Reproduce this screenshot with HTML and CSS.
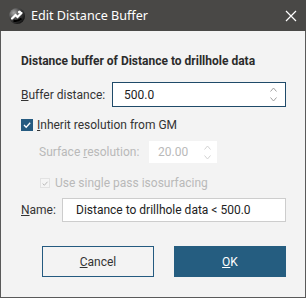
FILE: index.html
```html
<!DOCTYPE html>
<html lang="en">
<head>
  <meta charset="UTF-8">
  <title>Edit Distance Buffer</title>
  <link rel="stylesheet" href="styles.css">
</head>
<body>
  <div class="window">
    <!-- title bar -->
    <div class="titlebar">
      <svg class="app-icon" width="18" height="18" viewBox="0 0 18 18">
        <defs>
          <radialGradient id="ball" cx="0.3" cy="0.3" r="0.85">
            <stop offset="0" stop-color="#a8a8a8"/>
            <stop offset="0.45" stop-color="#4a4a4a"/>
            <stop offset="1" stop-color="#050505"/>
          </radialGradient>
        </defs>
        <circle cx="9" cy="9" r="8" fill="url(#ball)"/>
        <path d="M4 11.5 L7.5 8 L9.5 10 L13.5 6" stroke="#fff" stroke-width="2.2" fill="none" stroke-linecap="round"/>
        <circle cx="11.5" cy="5" r="1.6" fill="#fff"/>
        <path d="M5.5 13.5 Q9 15 13.5 11.5" stroke="#000" stroke-width="2" fill="none"/>
      </svg>
      <span class="title">Edit Distance Buffer</span>
      <svg class="close" width="12" height="12" viewBox="0 0 12 12">
        <path d="M1 1 L11 11 M11 1 L1 11" stroke="#fff" stroke-width="1.2"/>
      </svg>
    </div>

    <div class="content">
      <h1 class="heading">Distance buffer of Distance to drillhole data</h1>

      <div class="row">
        <label class="label"><u>B</u>uffer distance:</label>
        <div class="input spin focused">
          <span>500.0</span>
          <span class="arrows">
            <svg width="7" height="5" viewBox="0 0 7 5"><path d="M0.5 4.5 L3.5 1 L6.5 4.5" stroke="#a0a0a0" fill="none"/></svg>
            <svg width="7" height="5" viewBox="0 0 7 5"><path d="M0.5 0.5 L3.5 4 L6.5 0.5" stroke="#a0a0a0" fill="none"/></svg>
          </span>
        </div>
      </div>

      <div class="check-row">
        <span class="box checked">
          <svg width="10" height="10" viewBox="0 0 10 10"><path d="M2 5 L4.2 7.2 L8.2 2.8" stroke="#fff" stroke-width="1.3" fill="none"/></svg>
        </span>
        <span class="check-label"><u>I</u>nherit resolution from GM</span>
      </div>

      <div class="row sub disabled">
        <label class="label">Surface <u>r</u>esolution:</label>
        <div class="input spin small">
          <span>20.00</span>
          <span class="arrows">
            <svg width="7" height="5" viewBox="0 0 7 5"><path d="M0.5 4.5 L3.5 1 L6.5 4.5" stroke="#d2d2d2" fill="none"/></svg>
            <svg width="7" height="5" viewBox="0 0 7 5"><path d="M0.5 0.5 L3.5 4 L6.5 0.5" stroke="#d2d2d2" fill="none"/></svg>
          </span>
        </div>
      </div>

      <div class="check-row sub disabled">
        <span class="box off">
          <svg width="9" height="9" viewBox="0 0 10 10"><path d="M2 5 L4.2 7.2 L8.2 2.8" stroke="#b5b5b5" stroke-width="1.2" fill="none"/></svg>
        </span>
        <span class="check-label">Use single pass isosurfacing</span>
      </div>

      <div class="row name-row">
        <label class="label"><u>N</u>ame:</label>
        <div class="input plain">Distance to drillhole data &lt; 500.0</div>
      </div>

      <div class="buttons">
        <button class="btn cancel"><u>C</u>ancel</button>
        <button class="btn ok"><u>O</u>K</button>
      </div>
    </div>
  </div>
</body>
</html>
```

FILE: styles.css
```css
* {
  box-sizing: border-box;
  margin: 0;
  padding: 0;
}
body {
  background: #f3f3f3;
  font-family: Roboto, "Liberation Sans", sans-serif;
  font-size: 12px;
  color: #222;
}
.window {
  width: 306px;
  height: 298px;
  border: 1px solid #595959;
  border-top: none;
  background: #f3f3f3;
  display: flex;
  flex-direction: column;
}
/* title bar */
.titlebar {
  height: 31px;
  flex: none;
  background: #494846;
  display: flex;
  align-items: center;
  padding: 0 9px 0 8px;
  margin: 0 -1px;
}
.app-icon {
  flex: none;
}
.title {
  font-family: "Noto Sans", "Open Sans", sans-serif;
  color: #fff;
  font-size: 12.6px;
  margin-left: 5px;
  flex: 1;
}
.close {
  flex: none;
}
/* dialog content */
.content {
  padding: 21px 19px 0 20px;
  display: flex;
  flex-direction: column;
}
.heading {
  font-size: 12px;
  font-weight: bold;
  color: #2b2b2b;
  line-height: 18px;
  margin-bottom: 12px;
}
.row {
  display: flex;
  align-items: center;
  line-height: 16px;
}
.label {
  color: #333;
  width: 91px;
  flex: none;
  white-space: nowrap;
}
.input {
  height: 25px;
  background: #fff;
  display: flex;
  align-items: center;
  padding: 0 8px 0 11px;
  color: #222;
  white-space: nowrap;
}
.spin {
  flex: 1;
  justify-content: space-between;
}
.focused {
  border: 1px solid #1f4a69;
}
.arrows {
  display: flex;
  flex-direction: column;
  gap: 5px;
}
.arrows svg {
  display: block;
}
.check-row {
  display: flex;
  align-items: center;
  height: 16px;
  margin-top: 10px;
}
.box {
  width: 12px;
  height: 12px;
  display: flex;
  align-items: center;
  justify-content: center;
  flex: none;
}
.box.checked {
  background: #255a80;
}
.box.off {
  width: 10px;
  height: 10px;
  border: 1px solid #e2e2e2;
  background: #f5f5f5;
}
.check-label {
  margin-left: 4px;
  color: #333;
}
.sub {
  padding-left: 18px;
}
.disabled .label,
.disabled .check-label,
.disabled .input {
  color: #b9b9b9;
}
.row.sub {
  margin-top: 8px;
}
.row.sub .label {
  width: 110px;
}
.small {
  flex: none;
  width: 68px;
  height: 22px;
  padding: 0 6px 0 9px;
}
.check-row.sub {
  margin-top: 12px;
  padding-left: 19px;
}
.check-row.sub .check-label {
  margin-left: 5px;
}
.name-row {
  margin-top: 7px;
}
.name-row .label {
  width: 41px;
}
.plain {
  flex: 1;
  border: 1px solid #cdcdcd;
  height: 24px;
  padding-left: 13px;
}
/* buttons */
.buttons {
  display: flex;
  justify-content: flex-end;
  gap: 20px;
  margin-top: 24px;
}
.btn {
  width: 112px;
  height: 31px;
  font-family: Roboto, "Liberation Sans", sans-serif;
  font-size: 12px;
  cursor: pointer;
}
.cancel {
  background: #f3f3f3;
  border: 1px solid #245a80;
  color: #333;
}
.ok {
  background: #255d80;
  border: 1px solid #255d80;
  color: #fff;
}
```
